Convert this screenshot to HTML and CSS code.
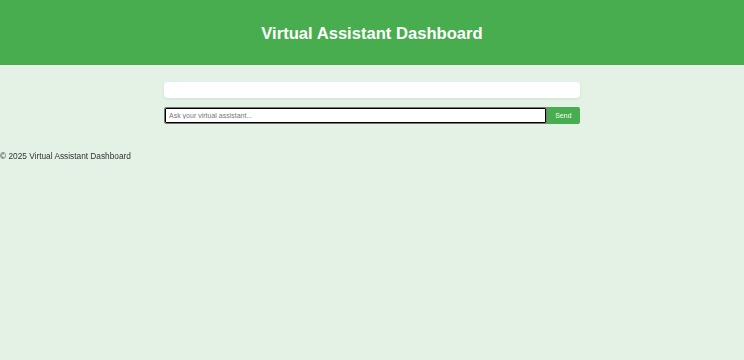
FILE: index.html
```html
<!DOCTYPE html>
<html lang="en">
<head>
<meta charset="utf-8">
<title>Virtual Assistant Dashboard</title>
<link rel="stylesheet" href="styles.css">
</head>
<body>
<header class="site-header">
  <h1 class="site-title">Virtual Assistant Dashboard</h1>
</header>
<main class="main">
  <div class="chat">
    <div class="chat-log"></div>
    <form class="chat-form">
      <input class="chat-input" type="text" placeholder="Ask your virtual assistant..." autofocus>
      <button class="chat-send" type="button">Send</button>
    </form>
  </div>
</main>
<footer class="site-footer">© 2025 Virtual Assistant Dashboard</footer>
</body>
</html>
```

FILE: styles.css
```css
html, body {
  margin: 0;
  padding: 0;
}
body {
  background: #e3f2e5;
  font-family: "Liberation Sans", Arial, sans-serif;
  color: #333;
  min-height: 360px;
}
.site-header {
  background: #48ad4e;
  height: 65px;
  box-sizing: border-box;
  padding-top: 3px;
  display: flex;
  align-items: center;
  justify-content: center;
}
.site-title {
  margin: 0;
  color: #fff;
  font-size: 16.6px;
  font-weight: bold;
  line-height: 1;
}
.main {
  display: flex;
  justify-content: center;
  padding-top: 17px;
}
.chat {
  width: 416px;
  display: flex;
  flex-direction: column;
  gap: 9px;
}
.chat-log {
  background: #fff;
  height: 16px;
  border-radius: 4px;
  box-shadow: 0 1px 3px rgba(0,0,0,0.08);
}
.chat-form {
  display: flex;
  margin: 0;
}
.chat-input {
  flex: 1;
  height: 17px;
  box-sizing: border-box;
  margin: 0;
  padding: 0 4px;
  border: 1px solid #777;
  border-radius: 2px 0 0 2px;
  outline: 1px solid #000;
  outline-offset: -2px;
  font-family: "Liberation Sans", Arial, sans-serif;
  font-size: 7px;
  color: #333;
  background: #fff;
}
.chat-input::placeholder {
  color: #777;
}
.chat-send {
  width: 33px;
  height: 17px;
  margin: 0;
  padding: 0;
  border: none;
  border-radius: 0 2px 2px 0;
  background: #48ad4e;
  color: #fff;
  font-family: "Liberation Sans", Arial, sans-serif;
  font-size: 7px;
}
.site-footer {
  margin-top: 27px;
  font-size: 8.3px;
  line-height: 10px;
  color: #333;
}
```
